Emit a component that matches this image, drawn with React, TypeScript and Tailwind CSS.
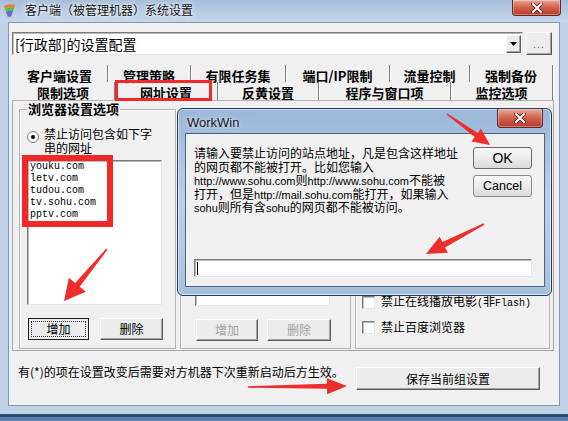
const cjk = "font-['Noto_Sans_CJK_SC',sans-serif]";
const mono = "font-['Liberation_Mono','Noto_Sans_CJK_SC',monospace]";
const latin = "font-['Liberation_Sans'] text-[11px]";
const raised =
  "bg-[#ececec] border border-t-[#fdfdfd] border-l-[#fdfdfd] border-r-[#5a5a5a] border-b-[#5a5a5a] shadow-[inset_-1px_-1px_0_#a3a3a3]";
const sunken =
  "bg-white border border-t-[#7a7a7a] border-l-[#7a7a7a] border-r-[#e6e6e6] border-b-[#e6e6e6] shadow-[inset_1px_1px_0_#b9b9b9]";

type Pt = [number, number];

function arrowPoints(t: Pt, h: Pt, hl: number, hw: number, sw: number) {
  const dx = h[0] - t[0];
  const dy = h[1] - t[1];
  const len = Math.hypot(dx, dy);
  const ux = dx / len;
  const uy = dy / len;
  const nx = -uy;
  const ny = ux;
  const bx = h[0] - ux * hl;
  const by = h[1] - uy * hl;
  const pts: Pt[] = [
    [t[0] + nx * 0.8, t[1] + ny * 0.8],
    [bx + nx * sw, by + ny * sw],
    [bx + nx * hw, by + ny * hw],
    h,
    [bx - nx * hw, by - ny * hw],
    [bx - nx * sw, by - ny * sw],
    [t[0] - nx * 0.8, t[1] - ny * 0.8],
  ];
  return pts.map((p) => `${p[0].toFixed(1)},${p[1].toFixed(1)}`).join(" ");
}

const arrows: { t: Pt; h: Pt; hl: number; hw: number; sw: number }[] = [
  { t: [107, 249], h: [64, 301], hl: 21, hw: 11, sw: 3 },
  { t: [447, 114], h: [490, 145], hl: 17, hw: 8, sw: 2.5 },
  { t: [484, 224], h: [426, 254], hl: 20, hw: 9, sw: 3 },
  { t: [248, 387], h: [347, 386], hl: 20, hw: 8, sw: 2.5 },
];

const tabsTop = [
  { label: "客户端设置", w: "w-[96px]" },
  { label: "管理策略", w: "w-[83px]" },
  { label: "有限任务集", w: "w-[95px]" },
  { label: "端口/IP限制", w: "w-[104px]" },
  { label: "流量控制", w: "w-[80px]" },
  { label: "强制备份", w: "w-[83px]" },
];

const tabsBottom = [
  { label: "限制选项", w: "w-[103px]" },
  { label: "网址设置", w: "w-[103px]" },
  { label: "反黄设置", w: "w-[101px]" },
  { label: "程序与窗口项", w: "w-[132px]" },
  { label: "监控选项", w: "w-[102px]" },
];

const sites = ["youku.com", "letv.com", "tudou.com", "tv.sohu.com", "pptv.com"];

function CloseButton({ className }: { className: string }) {
  return (
    <div
      className={`flex items-center justify-center rounded-b-[4px] border border-t-0 border-[#5e2a22] bg-gradient-to-b from-[#e9a797] via-[#d2604c] to-[#b53c28] shadow-[inset_0_0_0_1px_rgba(255,255,255,0.35)] ${className}`}
    >
      <svg width="12" height="10" viewBox="0 0 12 10">
        <path d="M2 1 L10 9 M10 1 L2 9" stroke="#4a1a12" strokeWidth="3.6" strokeLinecap="square" />
        <path d="M2 1 L10 9 M10 1 L2 9" stroke="#ffffff" strokeWidth="2" strokeLinecap="square" />
      </svg>
    </div>
  );
}

function AppIcon() {
  return (
    <svg width="14" height="15" viewBox="0 0 14 15" className="mt-[3px] ml-[3px] shrink-0">
      <path d="M1 3 Q6 0 12 2 L11 5 Q6 3 2 6 Z" fill="#e0862a" />
      <path d="M2 6 Q6 3 11 5 L10 8 Q6 7 3 9 Z" fill="#6db33f" />
      <path d="M3 9 Q6 7 10 8 L9 11 Q6 10 4 12 Z" fill="#3d7fd1" />
      <path d="M4 12 Q6 10 9 11 L8 14 Q6 13 5 14 Z" fill="#9a4fc2" />
    </svg>
  );
}

function Checkbox({ label }: { label: React.ReactNode }) {
  return (
    <div className="flex items-center h-[12px]">
      <div className={`w-[13px] h-[13px] shrink-0 ${sunken}`} />
      <span className="ml-[6px] text-[12px] leading-[12px] whitespace-nowrap">{label}</span>
    </div>
  );
}

export default function App() {
  return (
    <div className={`relative w-[568px] h-[421px] overflow-hidden bg-[#bfd2e8] text-black ${cjk}`}>
      {/* title bar */}
      <div className="h-[22px] flex items-start bg-gradient-to-b from-[#a6bdd9] to-[#c6d8ec]">
        <AppIcon />
        <div className="ml-[8px] mt-[2px] text-[12px] leading-[16px] text-[#111] [text-shadow:0_0_6px_#ffffff,0_0_3px_#ffffff]">
          客户端（被管理机器）系统设置
        </div>
        <CloseButton className="ml-auto mr-[7px] w-[49px] h-[16px]" />
      </div>

      {/* client area */}
      <div className="ml-[8px] w-[552px] h-[384px] border border-[#8497ae] bg-[#f0f0f0] flex flex-col">
        {/* config combo */}
        <div className="flex mt-[9px] ml-[3px] gap-[3px]">
          <div className={`w-[511px] h-[23px] flex items-center ${sunken}`}>
            <span className="ml-[2px] text-[14px] leading-[16px]">[行政部]的设置配置</span>
            <div className={`ml-auto mr-[1px] w-[15px] h-[18px] flex items-center justify-center ${raised}`}>
              <svg width="7" height="4" viewBox="0 0 7 4">
                <path d="M0 0 H7 L3.5 4 Z" fill="#000" />
              </svg>
            </div>
          </div>
          <div className={`w-[26px] h-[23px] flex items-end justify-center pb-[6px] ${raised}`}>
            <span className="text-[10px] leading-[6px] text-[#555] tracking-[1px] font-['Liberation_Sans']">...</span>
          </div>
        </div>

        {/* tabs */}
        <div className="mt-[10px] ml-[3px] w-[542px]">
          <div className="flex h-[17px]">
            {tabsTop.map((t) => (
              <div
                key={t.label}
                className={`${t.w} h-full flex items-center justify-center pt-[3px] border-r border-r-[#7d7d7d] shadow-[1px_0_0_#ffffff] text-[13px] font-bold leading-none`}
              >
                {t.label}
              </div>
            ))}
          </div>
          <div className="flex h-[18px]">
            {tabsBottom.map((t) => (
              <div
                key={t.label}
                className={`${t.w} h-full flex items-center justify-center pt-[2px] border-r border-r-[#7d7d7d] shadow-[1px_0_0_#ffffff] text-[13px] font-bold leading-none`}
              >
                {t.label}
              </div>
            ))}
          </div>
        </div>

        {/* tab page */}
        <div className="ml-[3px] w-[542px] h-[251px] border border-[#a9a9a9] border-t-[#b5b5b5] flex items-start pl-[6px] pt-[1px]">
          {/* browser options */}
          <fieldset className="w-[157px] h-[247px] border border-[#b3b3b3] shadow-[inset_1px_1px_0_#ffffff]">
            <legend className="ml-[7px] px-[1px] text-[13px] font-bold leading-[14px]">浏览器设置选项</legend>
            <div className="flex items-start mt-[11px] pl-[7px]">
              <div className="mt-[4px] w-[12px] h-[12px] shrink-0 rounded-full border border-[#7e7e7e] bg-white flex items-center justify-center">
                <div className="w-[4px] h-[4px] rounded-full bg-black" />
              </div>
              <div className="ml-[5px] text-[12px] leading-[14px] whitespace-nowrap">
                <div>禁止访问包含如下字</div>
                <div>串的网址</div>
              </div>
            </div>
            <div className={`mt-[5px] ml-[7px] w-[135px] h-[145px] pl-[2px] ${sunken}`}>
              {sites.map((s) => (
                <div key={s} className={`${mono} text-[10px] leading-[12px]`}>
                  {s}
                </div>
              ))}
            </div>
            <div className="flex mt-[13px] ml-[8px] gap-[11px]">
              <div className="w-[61px] h-[22px] border border-[#1e1e1e] bg-[#ececec] p-[2px]">
                <div className="w-full h-full border border-dotted border-[#333] flex items-center justify-center text-[12px] leading-none">
                  增加
                </div>
              </div>
              <div className={`w-[63px] h-[22px] flex items-center justify-center text-[12px] leading-none ${raised}`}>
                删除
              </div>
            </div>
          </fieldset>

          {/* allow list, mostly under the dialog */}
          <fieldset className="ml-[4px] mt-[7px] w-[171px] h-[240px] border border-[#b3b3b3] shadow-[inset_1px_1px_0_#ffffff] flex flex-col justify-end pb-[7px]">
            <div className={`ml-[14px] w-[135px] h-[145px] ${sunken} bg-[#fbfbfb]`} />
            <div className="flex mt-[13px] ml-[15px] gap-[9px]">
              <div className={`w-[62px] h-[22px] flex items-center justify-center text-[12px] leading-none text-[#a2a2a2] ${raised}`}>
                增加
              </div>
              <div className={`w-[64px] h-[22px] flex items-center justify-center text-[12px] leading-none text-[#a2a2a2] ${raised}`}>
                删除
              </div>
            </div>
          </fieldset>

          {/* other switches */}
          <fieldset className="ml-[4px] mt-[7px] w-[195px] h-[240px] border border-[#b3b3b3] shadow-[inset_1px_1px_0_#ffffff] pl-[6px] pb-[15px] flex flex-col gap-[13px] justify-end">
            <Checkbox
              label={
                <>
                  禁止在线播放电影<span className={`${mono} text-[10px]`}>(</span>非
                  <span className={`${mono} text-[10px]`}>Flash)</span>
                </>
              }
            />
            <Checkbox label="禁止百度浏览器" />
          </fieldset>
        </div>

        {/* footer */}
        <div className="flex items-start mt-[11px]">
          <div className="ml-[9px] text-[12px] leading-[20px] whitespace-nowrap">
            有(*)的项在设置改变后需要对方机器下次重新启动后方生效。
          </div>
          <div className={`ml-auto mr-[19px] mt-[5px] w-[184px] h-[23px] flex items-center justify-center text-[12px] leading-none ${raised}`}>
            保存当前组设置
          </div>
        </div>
      </div>

      <div className="mt-[8px] h-[3px] bg-[#2f4e75]" />
      <div className="h-[4px] bg-[#5c80ad]" />

      {/* WorkWin prompt */}
      <div className="absolute left-[177px] top-[108px] w-[375px] h-[188px] rounded-[6px] border border-[#203d62] bg-gradient-to-b from-[#9ab7d9] via-[#bcd0e8] to-[#a7c1de] shadow-[inset_0_0_0_1px_rgba(255,255,255,0.55)] flex flex-col">
        <div className="h-[24px] flex items-start">
          <span className="ml-[9px] mt-[6px] text-[13px] leading-[16px] text-[#1a1a1a] font-['Liberation_Sans',sans-serif] [text-shadow:0_0_5px_#ffffff]">
            WorkWin
          </span>
          <CloseButton className="ml-auto mr-[8px] w-[46px] h-[19px]" />
        </div>
        <div className="ml-[7px] mr-[6px] mb-[8px] flex-1 border border-[#4a6382] bg-[#f0f0f0] flex flex-col">
          <div className="flex">
            <div className="pl-[8px] pt-[12px] text-[12px] leading-[13.5px] whitespace-nowrap">
              <div className="h-[13.5px]">请输入要禁止访问的站点地址，凡是包含这样地址</div>
              <div className="h-[13.5px]">的网页都不能被打开。比如您输入</div>
              <div className="h-[13.5px]">
                <span className={latin}>http://www.sohu.com</span>则<span className={latin}>http://www.sohu.com</span>不能被
              </div>
              <div className="h-[13.5px]">
                打开，但是<span className={latin}>http://mail.sohu.com</span>能打开，如果输入
              </div>
              <div className="h-[13.5px]">
                <span className={latin}>sohu</span>则所有含<span className={latin}>sohu</span>的网页都不能被访问。
              </div>
            </div>
            <div className="ml-auto mr-[12px] mt-[13px] flex flex-col gap-[6px] font-['Liberation_Sans',sans-serif]">
              <div className="w-[59px] h-[22px] rounded-[3px] border border-[#6a6a6a] bg-gradient-to-b from-[#f7f7f7] via-[#ececec] to-[#d9d9d9] flex items-center justify-center text-[14px] leading-none">
                OK
              </div>
              <div className="w-[59px] h-[22px] rounded-[3px] border border-[#8a8a8a] bg-gradient-to-b from-[#f7f7f7] via-[#ececec] to-[#d9d9d9] flex items-center justify-center text-[12.5px] leading-none">
                Cancel
              </div>
            </div>
          </div>
          <div className={`mt-auto mb-[9px] ml-[8px] mr-[12px] h-[18px] flex items-center ${sunken}`}>
            <div className="ml-[2px] w-[1px] h-[13px] bg-black" />
          </div>
        </div>
      </div>

      {/* red annotations */}
      <div className="absolute left-[115px] top-[80px] w-[97px] h-[21px] border-[3px] border-[#ee2a2a]" />
      <div className="absolute left-[22px] top-[155px] w-[91px] h-[72px] border-[6px] border-[#f02828]" />
      <svg className="absolute left-0 top-0 pointer-events-none" width="568" height="421" viewBox="0 0 568 421">
        {arrows.map((a, i) => (
          <polygon key={i} points={arrowPoints(a.t, a.h, a.hl, a.hw, a.sw)} fill="#f02d2d" />
        ))}
      </svg>
    </div>
  );
}
